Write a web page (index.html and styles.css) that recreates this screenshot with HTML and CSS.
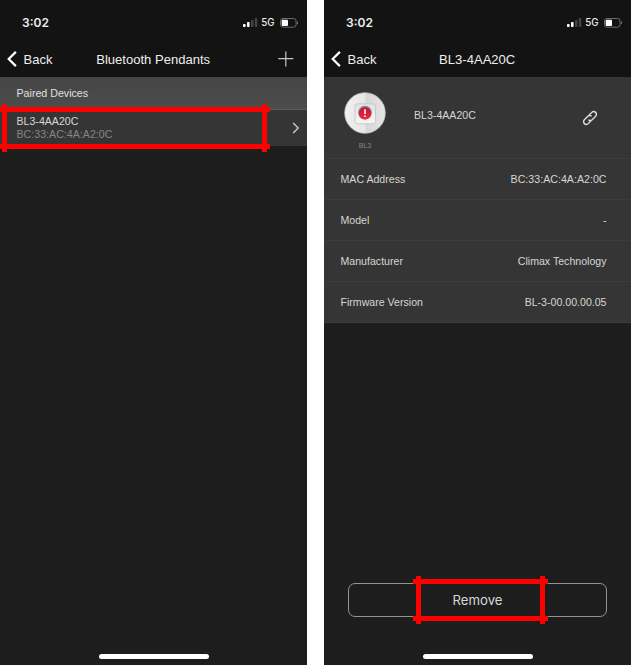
FILE: index.html
```html
<!DOCTYPE html>
<html lang="en">
<head>
<meta charset="utf-8">
<title>Bluetooth Pendants</title>
<link rel="stylesheet" href="styles.css">
</head>
<body>
<main class="screens">
  <section class="phone">
    <header class="top">
      <div class="status">
        <span class="time">3:02</span>
        <svg class="signal" width="15" height="10" viewBox="0 0 15 10"><rect x="0" y="6" width="2.6" height="3" rx=".7" fill="#fff"/><rect x="4" y="4" width="2.6" height="5" rx=".7" fill="#fff"/><rect x="8" y="2" width="2.5" height="7" rx=".7" fill="#444"/><rect x="11.8" y="0" width="2.5" height="9" rx=".7" fill="#444"/></svg>
        <span class="network">5G</span>
        <svg class="battery" width="19" height="10" viewBox="0 0 19 10"><rect x=".5" y=".5" width="15.6" height="8.7" rx="2.5" fill="none" stroke="#6c6c6c"/><rect x="1.7" y="1.8" width="6.3" height="6.1" rx="1" fill="#fff"/><path d="M17.5 3.6v2.5" stroke="#6c6c6c"/></svg>
      </div>
      <nav class="nav">
        <a class="back"><svg width="10" height="16" viewBox="0 0 10 16"><path d="M8.9 .9 1.7 8l7.2 7.1" fill="none" stroke="#fff" stroke-width="2.2"/></svg>Back</a>
        <h1>Bluetooth Pendants</h1>
        <svg class="add" width="16" height="16" viewBox="0 0 16 16"><path d="M7.8 .5v15M.3 7.7h15" stroke="#c8c8c8" stroke-width="1.2"/></svg>
      </nav>
    </header>
    <h2 class="group">Paired Devices</h2>
    <div class="device">
      <div class="device-text"><div>BL3-4AA20C</div><div class="mac">BC:33:AC:4A:A2:0C</div></div>
      <svg width="8" height="12" viewBox="0 0 8 12"><path d="m1.2 1 5 5-5 5" fill="none" stroke="#ccc" stroke-width="1.4"/></svg>
    </div>
    <div class="mark mark-device"><i></i><i></i><b></b><b></b></div>
    <div class="home"></div>
  </section>

  <section class="phone">
    <header class="top">
      <div class="status">
        <span class="time">3:02</span>
        <svg class="signal" width="15" height="10" viewBox="0 0 15 10"><rect x="0" y="6" width="2.6" height="3" rx=".7" fill="#fff"/><rect x="4" y="4" width="2.6" height="5" rx=".7" fill="#fff"/><rect x="8" y="2" width="2.5" height="7" rx=".7" fill="#444"/><rect x="11.8" y="0" width="2.5" height="9" rx=".7" fill="#444"/></svg>
        <span class="network">5G</span>
        <svg class="battery" width="19" height="10" viewBox="0 0 19 10"><rect x=".5" y=".5" width="15.6" height="8.7" rx="2.5" fill="none" stroke="#6c6c6c"/><rect x="1.7" y="1.8" width="6.3" height="6.1" rx="1" fill="#fff"/><path d="M17.5 3.6v2.5" stroke="#6c6c6c"/></svg>
      </div>
      <nav class="nav">
        <a class="back"><svg width="10" height="16" viewBox="0 0 10 16"><path d="M8.9 .9 1.7 8l7.2 7.1" fill="none" stroke="#fff" stroke-width="2.2"/></svg>Back</a>
        <h1>BL3-4AA20C</h1>
      </nav>
    </header>
    <div class="summary">
      <div class="thumb">
        <svg width="42" height="42" viewBox="0 0 42 42">
          <defs>
            <linearGradient id="disc"><stop offset="0" stop-color="#f0f0f0"/><stop offset=".5" stop-color="#e6e6e6"/><stop offset=".53" stop-color="#d6d6d6"/><stop offset="1" stop-color="#e6e6e6"/></linearGradient>
            <linearGradient id="key" x2="0" y2="1"><stop offset="0" stop-color="#e2e2e2"/><stop offset="1" stop-color="#f6f6f6"/></linearGradient>
            <linearGradient id="alarm" x2="0" y2="1"><stop offset="0" stop-color="#c41430"/><stop offset="1" stop-color="#f02a42"/></linearGradient>
          </defs>
          <circle cx="21" cy="21" r="20.3" fill="url(#disc)" stroke="#c6c6c6" stroke-width=".7"/>
          <rect x="11" y="11.8" width="20.5" height="20" rx="2.5" fill="url(#key)" stroke="#c3c3c3" stroke-width=".8"/>
          <circle cx="21" cy="20.6" r="6.9" fill="#858585"/>
          <circle cx="21" cy="21.4" r="6.1" fill="url(#alarm)"/>
          <path d="M21 17.3v4.6M21 23.4v1.7" stroke="#fff" stroke-width="1.7"/>
        </svg>
        <span>BL3</span>
      </div>
      <div class="name">BL3-4AA20C</div>
      <svg class="link" width="18" height="18" viewBox="0 0 24 24" fill="none" stroke="#ddd" stroke-width="1.9" stroke-linecap="round"><path d="m10.9 8.1 3.5-3.6a3.6 3.6 0 0 1 5.1 0 3.6 3.6 0 0 1 0 5.1l-4.6 4.6a3.6 3.6 0 0 1-4.4.5M13.1 15.9l-3.5 3.6a3.6 3.6 0 0 1-5.1 0 3.6 3.6 0 0 1 0-5.1l4.6-4.6a3.6 3.6 0 0 1 4.4-.5"/></svg>
    </div>
    <dl class="details">
      <div><dt>MAC Address</dt><dd class="address">BC:33:AC:4A:A2:0C</dd></div>
      <div><dt>Model</dt><dd>-</dd></div>
      <div><dt>Manufacturer</dt><dd>Climax Technology</dd></div>
      <div><dt>Firmware Version</dt><dd>BL-3-00.00.00.05</dd></div>
    </dl>
    <button class="remove">Remove</button>
    <div class="mark mark-remove"><i></i><i></i><b></b><b></b></div>
    <div class="home"></div>
  </section>
</main>
</body>
</html>
```
FILE: styles.css
```css
* { box-sizing: border-box; }
body { margin: 0; background: #fff; }
svg { display: block; flex: none; }
.screens { display: flex; gap: 17px; height: 665px; }
.phone {
  position: relative;
  display: flex;
  flex-direction: column;
  width: 307px;
  overflow: hidden;
  background: #1d1d1d;
  color: #d6d6d6;
  font: 10.6px "Liberation Sans", Arial, sans-serif;
}
.top { height: 77px; background: #131313; color: #eee; }
.status {
  display: flex;
  align-items: center;
  height: 43px;
  padding: 2px 8.5px 0 22px;
  font-family: Inter, sans-serif;
}
.time { margin-right: auto; font-size: 12px; font-weight: 600; }
.network { margin: 0 5px 0 3px; font-size: 9.7px; font-weight: 500; }
.signal { margin-top: 1px; }
.nav {
  display: grid;
  grid-template-columns: 70px 1fr 70px;
  align-items: center;
  height: 32px;
  padding: 0 13px 0 7px;
  font-size: 13px;
}
.back { display: flex; align-items: center; gap: 6.5px; }
h1 { margin: 0; text-align: center; font-size: 13.05px; font-weight: 400; transform: translateX(2.7px); }
.add { justify-self: end; }
.group {
  height: 32px;
  margin: 0;
  padding-left: 16.5px;
  background: linear-gradient(#454545, #4c4c4c);
  font-size: 10.65px;
  font-weight: 400;
  line-height: 33px;
  color: #e0e0e0;
}
.device {
  display: flex;
  align-items: center;
  justify-content: space-between;
  height: 37px;
  padding: 0 7.5px 0 16.5px;
  border-top: 1px solid #5d5d5d;
  background: #353535;
}
.device-text { line-height: 13.5px; }
.mac { color: #858585; letter-spacing: .03px; }
.address { letter-spacing: .03px; }
.summary {
  display: flex;
  align-items: center;
  height: 82px;
  padding: 0 32px 0 20px;
  border-bottom: 1px solid #3c3c3c;
  background: #353535;
}
.thumb { display: flex; flex-direction: column; align-items: center; width: 42px; padding-top: 7px; }
.thumb span { margin-top: 8px; font-size: 7px; line-height: 8px; color: #858585; }
.name { flex: 1; margin: -6px 0 0 28px; }
.details { margin: 0; background: #353535; }
.details div {
  display: flex;
  align-items: center;
  justify-content: space-between;
  height: 41px;
  padding: 0 24.5px 0 16.5px;
  border-bottom: 1px solid #3c3c3c;
}
.details dd { margin: 0; }
.remove {
  width: 259px;
  height: 34px;
  margin: auto 24px 37px;
  padding: 0;
  border: 1px solid #939393;
  border-radius: 7px;
  background: none;
  color: #d6d6d6;
  font: 13.2px Inter, sans-serif;
}
.home { width: 110px; height: 5px; margin: 0 auto 6px 99px; border-radius: 3px; background: #fff; }
.phone:first-child .home { margin-top: auto; }

/* Highlight frames drawn over the screens */
.mark { position: absolute; }
.mark i, .mark b { position: absolute; background: #f00; }
.mark i { left: 0; right: 0; height: 5px; }
.mark b { top: 0; bottom: 0; width: 5px; }
.mark i:nth-of-type(1) { top: 3px; }
.mark i:nth-of-type(2) { bottom: 3px; }
.mark b:nth-of-type(1) { left: 3px; }
.mark b:nth-of-type(2) { right: 3px; }
.mark-device { left: -1px; top: 104px; width: 271px; height: 48px; }
.mark-remove { left: 89px; top: 576px; width: 135px; height: 48px; }
```
